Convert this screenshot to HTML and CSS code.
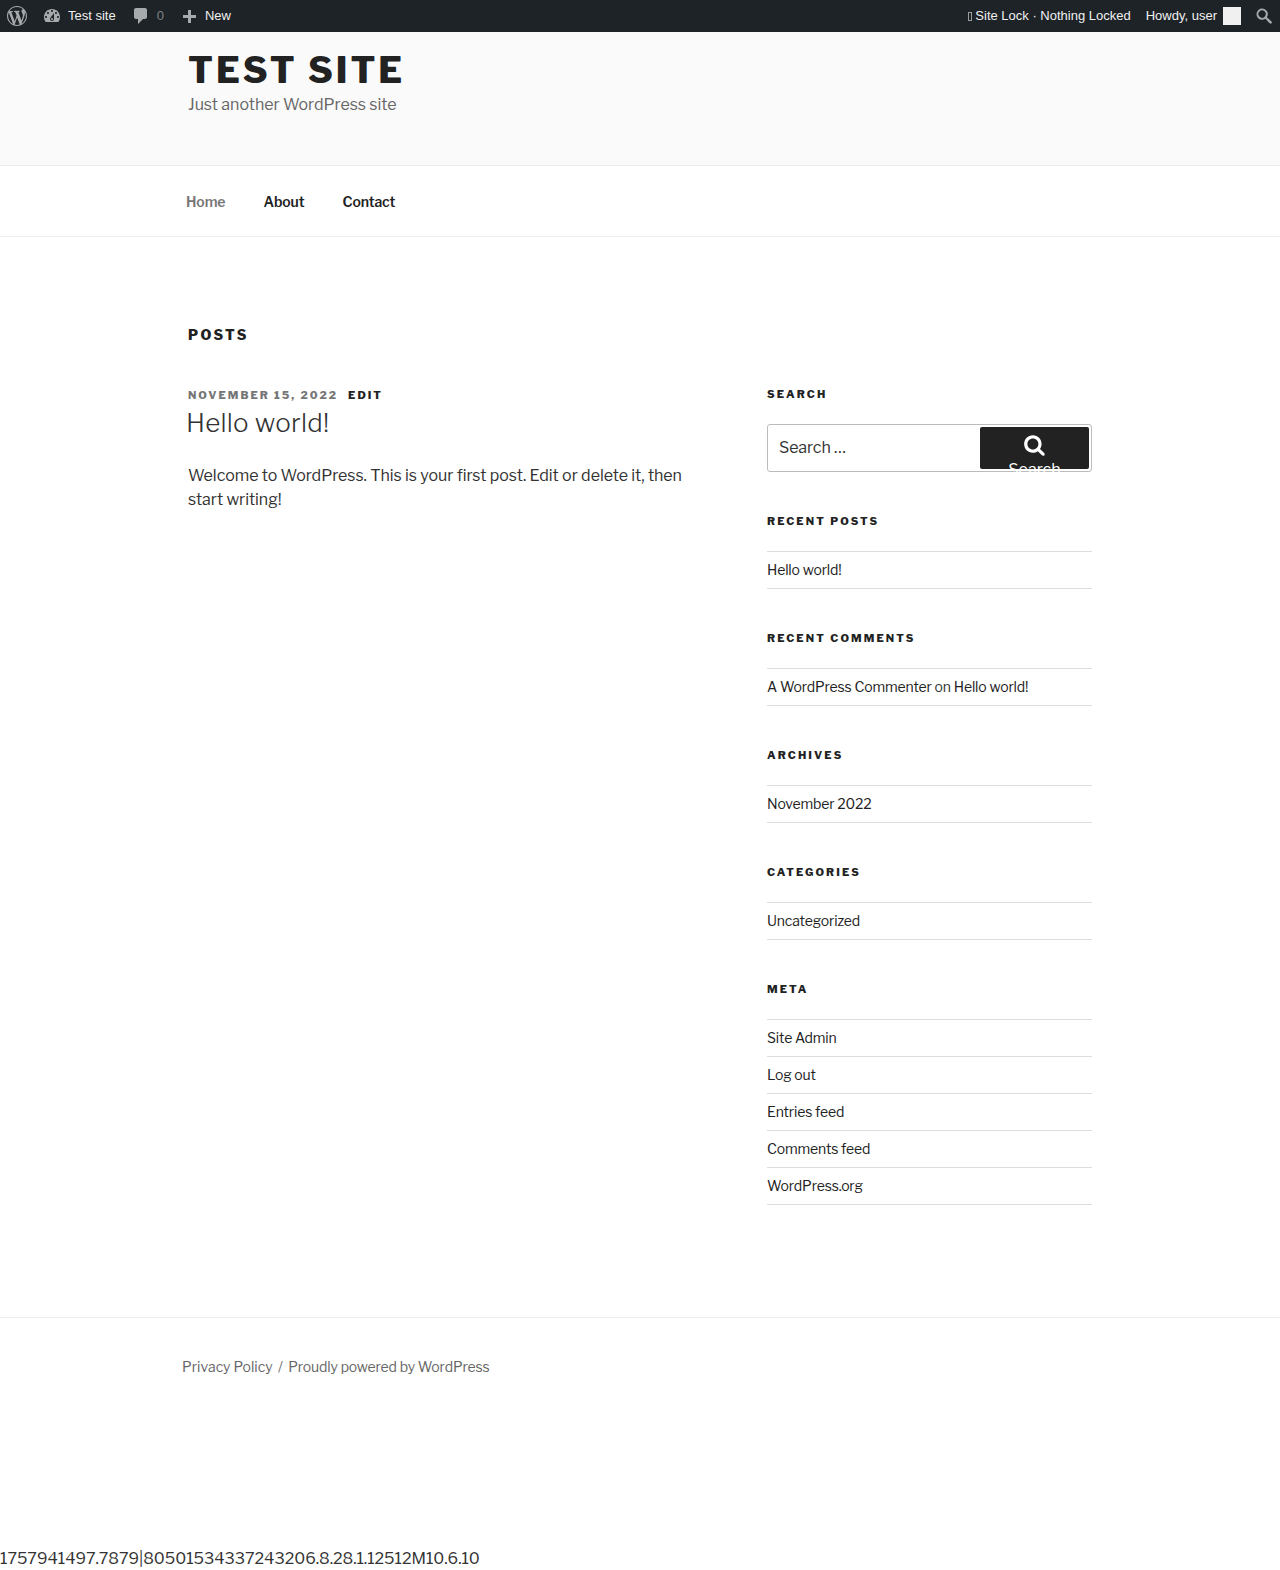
FILE: index.html
```html
<!DOCTYPE html>
<html lang="en">
<head>
<meta charset="utf-8">
<title>Test Site</title>
<link rel="stylesheet" href="styles.css">
</head>
<body>
<div class="adminbar">
  <div class="ab-group">
    <a class="ab-item ab-logo"><svg class="ab-icon" viewBox="0 0 20 20"><path d="M20 10c0-5.510-4.490-10-10-10C4.480 0 0 4.490 0 10c0 5.520 4.480 10 10 10 5.510 0 10-4.480 10-10zM7.780 15.370L4.370 6.220c.55-.02 1.170-.08 1.170-.08.5-.06.44-1.130-.06-1.110 0 0-1.450.11-2.370.11-.18 0-.37 0-.58-.01C4.120 2.690 6.870 1.110 10 1.110c2.330 0 4.450.87 6.050 2.340-.68-.11-1.650.39-1.650 1.580 0 .74.45 1.360.9 2.100.35.61.55 1.360.55 2.460 0 1.490-1.400 5-1.400 5l-3.030-8.370c.54-.02.82-.17.82-.17.5-.05.44-1.250-.06-1.220 0 0-1.440.12-2.380.12-.87 0-2.330-.12-2.330-.12-.5-.03-.56 1.200-.06 1.220l.92.08 1.260 3.410zM17.410 10c.24-.64.74-1.870.43-4.250.7 1.290 1.050 2.710 1.050 4.250 0 3.290-1.730 6.240-4.400 7.780.97-2.590 1.940-5.200 2.920-7.780zM6.100 18.090C3.120 16.650 1.110 13.530 1.110 10c0-1.300.23-2.480.72-3.590C3.250 10.300 4.670 14.200 6.100 18.090zm4.030-6.630l2.580 6.980c-.86.29-1.760.45-2.710.45-.79 0-1.570-.11-2.290-.33.81-2.380 1.620-4.740 2.420-7.100z"/></svg></a>
    <a class="ab-item"><svg class="ab-icon" viewBox="0 0 20 20"><path d="M3.760 16h12.480c1.100-1.370 1.760-3.100 1.760-5 0-4.420-3.580-8-8-8s-8 3.580-8 8c0 1.900.66 3.630 1.760 5zM10 4c.55 0 1 .45 1 1s-.45 1-1 1-1-.45-1-1 .45-1 1-1zM6 6c.55 0 1 .45 1 1s-.45 1-1 1-1-.45-1-1 .45-1 1-1zm8 0c.55 0 1 .45 1 1s-.45 1-1 1-1-.45-1-1 .45-1 1-1zm-5.370 5.550L12 7v6c0 1.100-.9 2-2 2s-2-.9-2-2c0-.57.24-1.080.63-1.450zM4 10c.55 0 1 .45 1 1s-.45 1-1 1-1-.45-1-1 .45-1 1-1zm12 0c.55 0 1 .45 1 1s-.45 1-1 1-1-.45-1-1 .45-1 1-1zm-5 3c0-.55-.45-1-1-1s-1 .45-1 1 .45 1 1 1 1-.45 1-1z"/></svg><span>Test site</span></a>
    <a class="ab-item ab-comments"><svg class="ab-icon" viewBox="0 0 20 20"><path d="M5 2h9c1.100 0 2 .9 2 2v7c0 1.100-.9 2-2 2h-2l-5 5v-5H5c-1.100 0-2-.9-2-2V4c0-1.100.9-2 2-2z"/></svg><span class="ab-count">0</span></a>
    <a class="ab-item ab-new"><svg class="ab-icon" viewBox="0 0 20 20"><path d="M17 9v3h-5v5H9v-5H4V9h5V4h3v5h5z"/></svg><span>New</span></a>
  </div>
  <div class="ab-group">
    <a class="ab-item ab-lock"><i class="tofu"></i><span>Site Lock · Nothing Locked</span></a>
    <a class="ab-item ab-user"><span>Howdy, user</span><i class="avatar"></i></a>
    <a class="ab-item ab-search"><svg class="ab-icon" viewBox="0 0 20 20"><path d="M12.140 4.180a5.630 5.630 0 0 1 .7 7.080c1.350 1.110 3.250 2.870 4.670 4.280.48.48.5 1.300 0 1.800-.5.5-1.320.48-1.800 0-1.410-1.420-3.170-3.320-4.280-4.670a5.620 5.620 0 1 1 .71-8.490zm-1.410 1.410a3.630 3.630 0 1 0-5.130 5.130 3.630 3.630 0 0 0 5.130-5.130z"/></svg></a>
  </div>
</div>

<header class="masthead">
  <div class="branding">
    <h1 class="site-title">Test Site</h1>
    <p class="tagline">Just another WordPress site</p>
  </div>
  <nav class="nav">
    <ul class="nav-list">
      <li class="current"><a>Home</a></li>
      <li><a>About</a></li>
      <li><a>Contact</a></li>
    </ul>
  </nav>
</header>

<main class="content">
  <h2 class="page-title">Posts</h2>
  <div class="columns">
    <article class="post">
      <div class="meta"><span class="date">November 15, 2022</span><span class="edit">Edit</span></div>
      <h3 class="entry-title">Hello world!</h3>
      <p class="entry">Welcome to WordPress. This is your first post. Edit or delete it, then start writing!</p>
    </article>
    <aside class="sidebar">
      <section class="widget">
        <h2 class="widget-title">Search</h2>
        <form class="search">
          <div class="search-field">Search …</div>
          <div class="search-submit"><svg viewBox="0 0 30 32"><path d="M20.800 14.900c0-3.300-2.600-5.900-5.900-5.900S9 11.600 9 14.900s2.600 5.900 5.900 5.900 5.900-2.600 5.900-5.900zm6.700 11c0 1-.7 1.700-1.700 1.700-.5 0-.9-.2-1.200-.5l-4.500-4.500c-1.500 1.100-3.400 1.700-5.300 1.700-5.200 0-9.300-4.200-9.300-9.400S9.700 5.500 14.900 5.500s9.300 4.200 9.300 9.400c0 1.900-.6 3.800-1.700 5.300l4.500 4.500c.3.300.5.700.5 1.200z"/></svg><span>Search</span></div>
        </form>
      </section>
      <section class="widget">
        <h2 class="widget-title">Recent Posts</h2>
        <ul class="list"><li><a>Hello world!</a></li></ul>
      </section>
      <section class="widget">
        <h2 class="widget-title">Recent Comments</h2>
        <ul class="list"><li><a>A WordPress Commenter</a> <span class="on">on</span> <a>Hello world!</a></li></ul>
      </section>
      <section class="widget">
        <h2 class="widget-title">Archives</h2>
        <ul class="list"><li><a>November 2022</a></li></ul>
      </section>
      <section class="widget">
        <h2 class="widget-title">Categories</h2>
        <ul class="list"><li><a>Uncategorized</a></li></ul>
      </section>
      <section class="widget">
        <h2 class="widget-title">Meta</h2>
        <ul class="list">
          <li><a>Site Admin</a></li>
          <li><a>Log out</a></li>
          <li><a>Entries feed</a></li>
          <li><a>Comments feed</a></li>
          <li><a>WordPress.org</a></li>
        </ul>
      </section>
    </aside>
  </div>
</main>

<footer class="footer">
  <div class="footer-inner"><a class="privacy">Privacy Policy</a><span class="sep">/</span><a>Proudly powered by WordPress</a></div>
</footer>
<div class="debug">1757941497.7879|80501534337243206.8.28.1.12512M10.6.10</div>
</body>
</html>
```
FILE: styles.css
```css
* { box-sizing: border-box; }
html, body { margin: 0; padding: 0; }
body {
  font-family: "Libre Franklin", Inter, "Liberation Sans", sans-serif;
  font-size: 16px;
  line-height: 24px;
  color: #333;
  background: #fff;
}
ul { list-style: none; margin: 0; padding: 0; }
h1, h2, h3, p { margin: 0; }

.adminbar {
  height: 32px;
  background: #1d2327;
  color: #f0f0f1;
  display: flex;
  justify-content: space-between;
  font-family: "Liberation Sans", sans-serif;
  font-size: 13px;
  line-height: 32px;
}
.ab-group { display: flex; }
.ab-item { display: flex; align-items: center; padding: 0 8px; gap: 6px; white-space: pre; }
.ab-icon { width: 20px; height: 20px; fill: #a7aaad; }
.ab-logo { padding: 0 7px; }
.ab-comments { padding-left: 7px; }
.ab-new { padding-left: 7px; }
.ab-count { color: #a7aaad; opacity: .7; }
.ab-lock { gap: 3px; padding-right: 7px; }
.tofu { width: 4px; height: 9px; border: 1px solid #9a9c9e; display: block; }
.avatar { width: 18px; height: 18px; background: #f0f0f1; display: block; }
.ab-search { padding: 0 6px 0 5px; }

.masthead { border-bottom: 1px solid #eee; }
.branding {
  padding: 16px 0 0 188px;
  height: 134px;
  background: #fafafa;
  border-bottom: 1px solid #eee;
}
.site-title {
  font-size: 36px;
  font-weight: 800;
  line-height: 45px;
  letter-spacing: 3px;
  text-transform: uppercase;
  color: #222;
}
.tagline { font-size: 16px; line-height: 24px; color: #666; letter-spacing: -.04px; }

.nav { height: 70px; }
.nav-list { display: flex; height: 72px; align-items: center; padding-left: 186px; font-size: 14px; font-weight: 600; color: #222; gap: 38px; letter-spacing: -.1px; }
.current { color: #767676; }

.content { padding: 89px 0 0 188px; width: 1092px; height: 1080px; }
.page-title {
  font-size: 14px;
  font-weight: 800;
  letter-spacing: 2.350px;
  line-height: 18px;
  text-transform: uppercase;
  color: #222;
}
.columns { display: flex; justify-content: space-between; margin-top: 42px; }
.post { width: 520px; }
.meta {
  font-size: 11px;
  font-weight: 800;
  letter-spacing: 2px;
  line-height: 18px;
  text-transform: uppercase;
  color: #767676;
}
.edit { color: #222; margin-left: 10px; }
.entry-title { font-size: 26px; font-weight: 300; line-height: 34px; margin: 2px 0 24px -2px; letter-spacing: .25px; color: #333; }
.entry { font-size: 16px; line-height: 24px; letter-spacing: -.05px; }

.sidebar { width: 325px; margin-top: -1px; }
.widget { margin-bottom: 40px; }
.widget-title {
  font-size: 11px;
  font-weight: 800;
  letter-spacing: 2.100px;
  line-height: 18px;
  text-transform: uppercase;
  color: #222;
  margin-bottom: 22px;
}
.search { position: relative; height: 48px; margin-top: -1px; }
.search-field {
  height: 48px;
  border: 1px solid #bbb;
  border-radius: 3px;
  padding: 0 11px;
  line-height: 45px;
  font-size: 16px;
  letter-spacing: -.1px;
  color: #333;
}
.search-submit {
  position: absolute;
  top: 3px;
  right: 3px;
  width: 109px;
  height: 42px;
  background: #222;
  border-radius: 2px;
  color: #fff;
  text-align: center;
  font-size: 16px;
  line-height: 20px;
}
.search-submit svg { display: block; width: 28px; height: 30px; fill: #fff; margin: 3px 0 0 39px; }
.search-submit span { display: block; margin-top: 0; }
.list { border-top: 1px solid #ddd; font-size: 14px; line-height: 20px; letter-spacing: -.14px; color: #222; margin-top: -1px; }
.list li { border-bottom: 1px solid #ddd; height: 37px; padding-top: 8px; }
.on { color: #333; }

.footer { border-top: 1px solid #eee; height: 230px; padding: 37px 0 0 182px; }
.footer-inner { font-size: 14px; line-height: 24px; color: #666; letter-spacing: -.14px; }
.privacy { letter-spacing: .03px; }
.sep { margin: 0 5.500px; }
.debug { line-height: 24px; letter-spacing: -.04px; }
```
